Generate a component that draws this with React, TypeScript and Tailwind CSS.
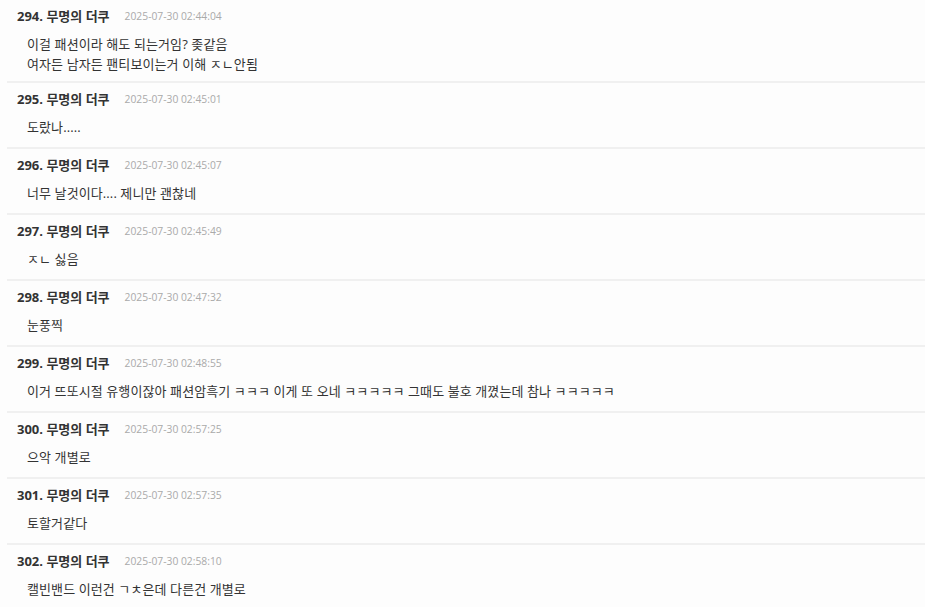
const comments = [
  { no: 294, time: '2025-07-30 02:44:04', lines: ['이걸 패션이라 해도 되는거임? 좆같음', '여자든 남자든 팬티보이는거 이해 ㅈㄴ안됨'] },
  { no: 295, time: '2025-07-30 02:45:01', lines: ['도랐나.....'] },
  { no: 296, time: '2025-07-30 02:45:07', lines: ['너무 날것이다.... 제니만 괜찮네'] },
  { no: 297, time: '2025-07-30 02:45:49', lines: ['ㅈㄴ 싫음'] },
  { no: 298, time: '2025-07-30 02:47:32', lines: ['눈풍찍'] },
  { no: 299, time: '2025-07-30 02:48:55', lines: ['이거 뜨또시절 유행이잖아 패션암흑기 ㅋㅋㅋ 이게 또 오네 ㅋㅋㅋㅋㅋ 그때도 불호 개꼈는데 참나 ㅋㅋㅋㅋㅋ'] },
  { no: 300, time: '2025-07-30 02:57:25', lines: ['으악 개별로'] },
  { no: 301, time: '2025-07-30 02:57:35', lines: ['토할거같다'] },
  { no: 302, time: '2025-07-30 02:58:10', lines: ['캘빈밴드 이런건 ㄱㅊ은데 다른건 개별로'] },
]

type Comment = { no: number; time: string; lines: string[]; first?: boolean }

const CommentItem = ({ no, time, lines, first }: Comment) => {
  return (
    <li className={`ml-[7px] border-b-2 border-[#f0f0f0] pt-[7px] ${first ? 'pb-[7px]' : 'pb-[10px]'}`}>
      <div className="flex items-center h-[20px] pl-[10px]">
        <span className="text-[13px] font-bold text-[#333]">{no}. 무명의 더쿠</span>
        <span className="ml-[15px] text-[10.3px] text-[#aaa]">{time}</span>
      </div>
      <div className="mt-[7px] pl-[20px] text-[13px] leading-[20px] tracking-[0.1px] text-[#333]">
        {lines.map((l, i) => (
          <p key={i}>{l}</p>
        ))}
      </div>
    </li>
  )
}

export default function App() {
  return (
    <div
      className="w-[925px] h-[607px] overflow-hidden bg-[#fdfdfd]"
      style={{ fontFamily: '"Open Sans", "Noto Sans CJK KR", sans-serif' }}
    >
      <ul>
        {comments.map((c, i) => (
          <CommentItem key={c.no} {...c} first={i === 0} />
        ))}
      </ul>
    </div>
  )
}
